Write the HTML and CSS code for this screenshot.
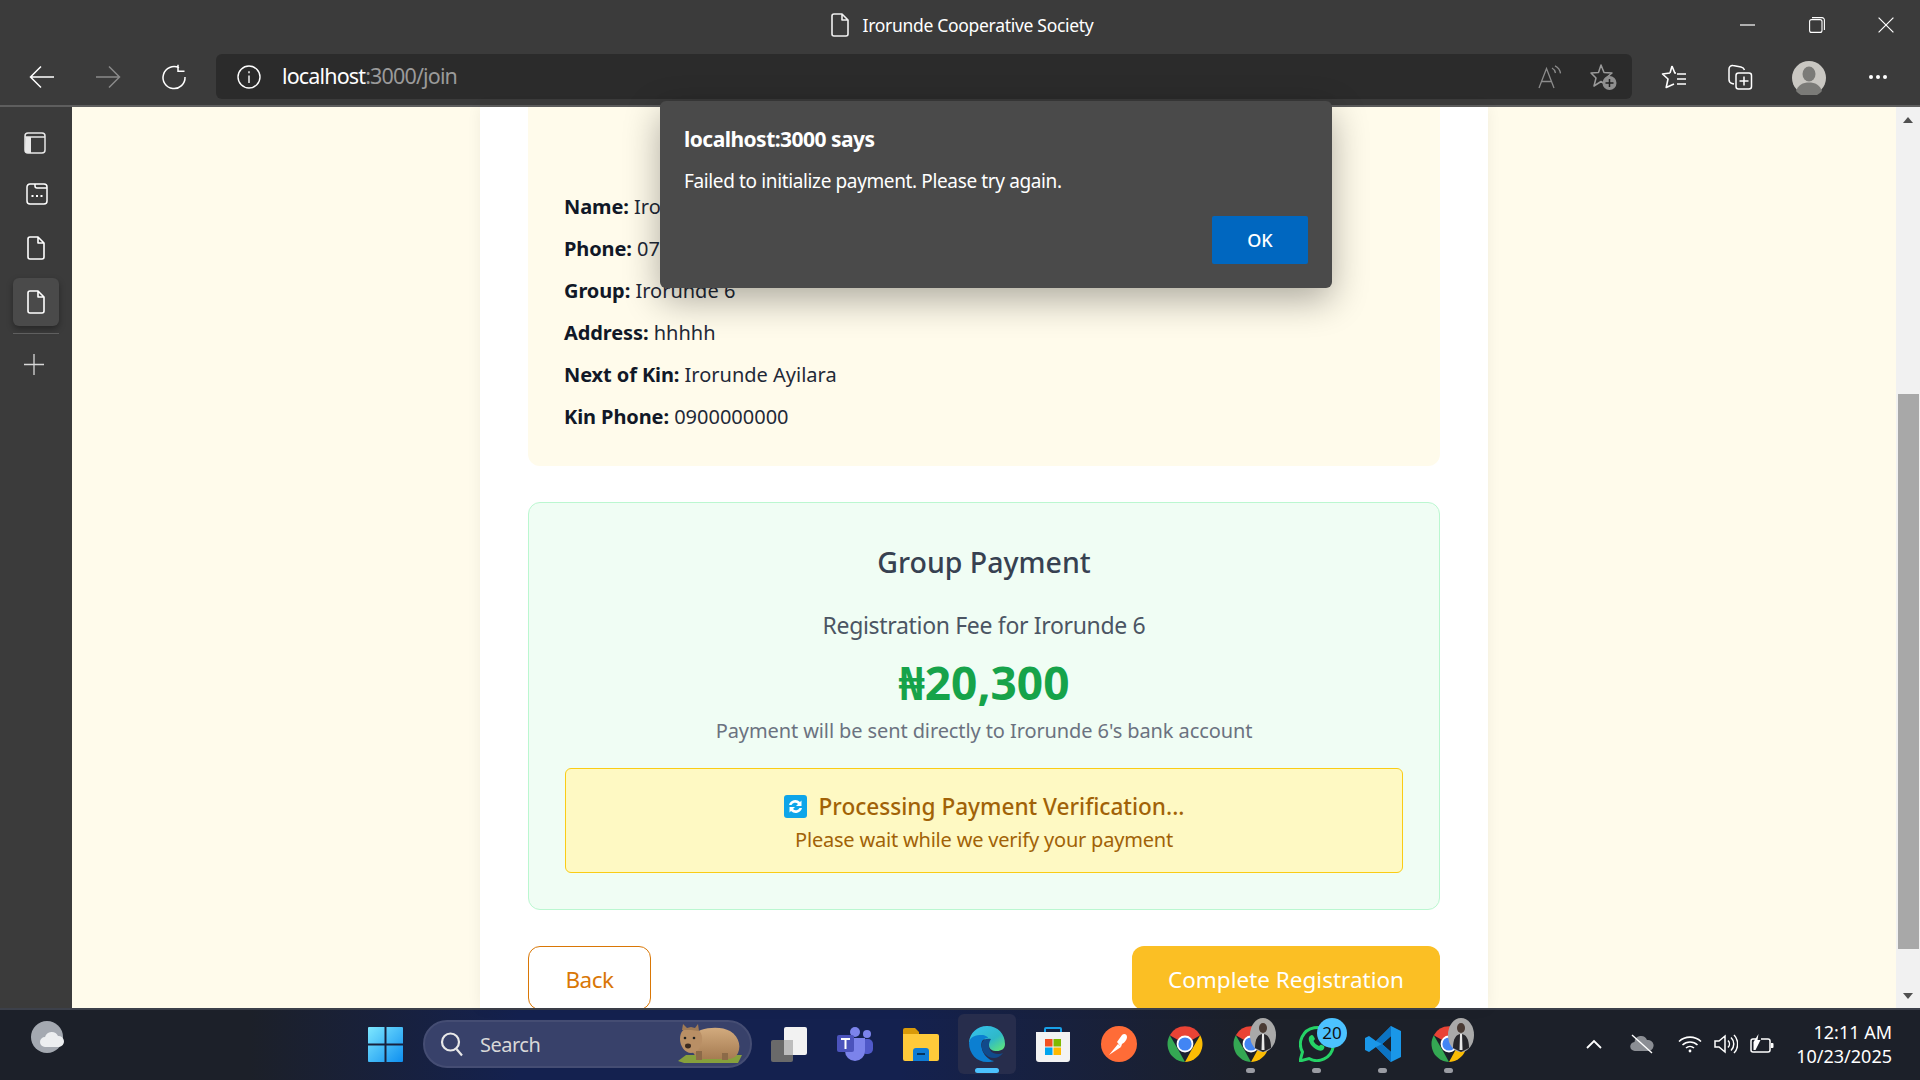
FILE: index.html
```html
<!DOCTYPE html>
<html lang="en">
<head>
  <meta charset="UTF-8">
  <title>Irorunde Cooperative Society</title>
  <link rel="stylesheet" href="styles.css">
</head>
<body>
  <svg class="defs" width="0" height="0">
    <defs>
      <symbol id="doc" viewBox="0 0 18 24"><path d="M3 1h8l6 6v14a2 2 0 0 1-2 2H3a2 2 0 0 1-2-2V3a2 2 0 0 1 2-2zM11 1v6h6" fill="none" stroke="currentColor" stroke-width="1.6" stroke-linejoin="round"/></symbol>
      <symbol id="chrome" viewBox="0 0 36 36">
        <path d="M18 18 2.800 9.200A17.500 17.500 0 0 1 33.200 9.200z" fill="#ea4335"/>
        <path d="M18 36A18 18 0 0 1 2.800 9.200l9 15.600z" fill="#34a853"/>
        <path d="M33.200 9.200A18 18 0 0 1 18 36l6-11z" fill="#fbbc04"/>
        <circle cx="18" cy="18" r="8.400" fill="#fff"/>
        <circle cx="18" cy="18" r="6.600" fill="#4285f4"/>
      </symbol>
      <symbol id="person" viewBox="0 0 26 34">
        <ellipse cx="13" cy="17" rx="13" ry="17" fill="#a9a9a9"/>
        <ellipse cx="13" cy="10" rx="4" ry="5" fill="#4a3b34"/>
        <path d="M5 30c0-9 3-14 8-14s8 5 8 14l-8 4z" fill="#26262b"/>
        <path d="M12 16h2l.5 16h-3z" fill="#e8e8e8"/>
      </symbol>
      <linearGradient id="fur" x1="0" y1="0" x2="0" y2="1"><stop offset="0" stop-color="#d2ab7e"/><stop offset="1" stop-color="#a67c52"/></linearGradient>
    </defs>
  </svg>

  <!-- title bar -->
  <div class="titlebar">
    <div></div>
    <div class="title">
      <svg class="title-icon" width="18" height="24"><use href="#doc"/></svg>
      <span>Irorunde Cooperative Society</span>
    </div>
    <div class="win-controls">
      <button class="win-btn"><svg width="16" height="16" viewBox="0 0 16 16"><path d="M0 8h15" stroke="#fff" stroke-width="1.2"/></svg></button>
      <button class="win-btn"><svg width="16" height="16" viewBox="0 0 16 16" fill="none" stroke="#fff" stroke-width="1.1"><rect x=".6" y="2.600" width="12.400" height="12.800" rx="2"/><path d="M3 .6h10a2.400 2.400 0 0 1 2.400 2.400v10"/></svg></button>
      <button class="win-btn"><svg width="16" height="16" viewBox="0 0 16 16"><path d="M.6.6l14.800 14.800M15.400.6.6 15.400" stroke="#fff" stroke-width="1.2"/></svg></button>
    </div>
  </div>

  <!-- toolbar -->
  <div class="toolbar">
    <button class="nav-btn"><svg width="26" height="24" viewBox="0 0 26 24" fill="none" stroke="#fff" stroke-width="1.5"><path d="M25 12H2M12 1.500 1.500 12 12 22.500"/></svg></button>
    <button class="nav-btn"><svg width="26" height="24" viewBox="0 0 26 24" fill="none" stroke="#8a8a8a" stroke-width="1.5"><path d="M1 12h23M14 1.500 24.500 12 14 22.500"/></svg></button>
    <button class="nav-btn"><svg width="26" height="26" viewBox="0 0 26 26" fill="none" stroke="#fff" stroke-width="1.5"><path d="M18 3.800A11 11 0 1 0 24 13M17 .8v6.400h6.500"/></svg></button>
    <div class="addressbar">
      <svg width="24" height="24" viewBox="0 0 24 24" fill="none" stroke="#fff" stroke-width="1.4"><circle cx="12" cy="12" r="11"/><path d="M12 10.500V18M12 6.200v2"/></svg>
      <div class="url">localhost<span class="url-dim">:3000/join</span></div>
      <div class="addr-actions">
        <svg width="24" height="24" viewBox="0 0 24 24" fill="none" stroke="#8c8c8c" stroke-width="1.3"><path d="M1 23 8.500 3.500 16 23M3.500 16.500h10M14 3c2 1 3 2.500 3.500 5M17 .8c3 1.500 5 4 5.500 7.500"/></svg>
        <svg width="28" height="28" viewBox="0 0 28 28"><path d="M11 2l3 7.500 8 .5-6 5 2 8-7-4.500L4 23l2-8-5-5 7.500-.5z" fill="none" stroke="#9a9a9a" stroke-width="1.5" stroke-linejoin="round"/><circle cx="19.500" cy="20" r="7" fill="#8f8f8f"/><path d="M19.500 16v8M15.500 20h8" stroke="#222" stroke-width="1.500"/></svg>
      </div>
    </div>
    <div class="browser-actions">
      <button class="nav-btn"><svg width="26" height="26" viewBox="0 0 26 26" fill="none" stroke="#fff" stroke-width="1.6" stroke-linejoin="round"><path d="M11 2l2.800 7H15M9 9 1.500 10l5.500 5-1.800 8.500L13 20M9 9l2-7"/><path d="M16 10h9M16 15h9M16 20h9"/></svg></button>
      <button class="nav-btn"><svg width="26" height="28" viewBox="0 0 26 28" fill="none" stroke="#fff" stroke-width="1.5"><path d="M7 21l-2-.5c-2-.5-3-2-3-4V6c0-2 2-4 4-3.500l8 1.500c2 .4 3 1.500 3.500 3"/><rect x="9" y="10" width="15.500" height="16" rx="2.500"/><path d="M17 13.500v9M12.500 18h9"/></svg></button>
      <div class="avatar">
        <svg width="34" height="34" viewBox="0 0 34 34"><circle cx="17" cy="17" r="17" fill="#c9c7c2"/><ellipse cx="17" cy="13" rx="6.500" ry="7.500" fill="#7b7b78"/><path d="M4 30c2-6 7-8.500 13-8.500S28 24 30 30a17 17 0 0 1-26 0z" fill="#7b7b78"/></svg>
      </div>
      <button class="nav-btn dots"><svg width="20" height="6" viewBox="0 0 20 6" fill="#fff"><circle cx="3" cy="3" r="2"/><circle cx="10" cy="3" r="2"/><circle cx="17" cy="3" r="2"/></svg></button>
    </div>
  </div>

  <div class="main">
    <!-- edge vertical tabs -->
    <aside class="sidebar">
      <svg class="side-icon" width="22" height="22" viewBox="0 0 22 22"><rect x="1" y="1" width="20" height="20" rx="3" fill="none" stroke="#e8e8e8" stroke-width="1.500"/><path d="M1 5h20" stroke="#e8e8e8" stroke-width="1.500"/><path d="M1.500 5H7v16H4a3 3 0 0 1-3-3z" fill="#e8e8e8"/></svg>
      <svg class="side-icon" width="22" height="22" viewBox="0 0 22 22" fill="none" stroke="#fff" stroke-width="1.500"><path d="M4 1h14a3 3 0 0 1 3 3v14a3 3 0 0 1-3 3H4a3 3 0 0 1-3-3V4a3 3 0 0 1 3-3zM9 1v2a2 2 0 0 0 2 2h10"/><path d="M5.500 13h2M10 13h2M14.500 13h2" stroke-width="2.200"/></svg>
      <svg class="side-icon side-doc" width="18" height="24"><use href="#doc"/></svg>
      <div class="side-tab"><svg width="18" height="24"><use href="#doc"/></svg></div>
      <div class="side-rule"></div>
      <svg class="side-icon side-plus" width="20" height="21" viewBox="0 0 20 21"><path d="M10 0v21M0 10.500h20" stroke="#d8d8d8" stroke-width="1.300"/></svg>
    </aside>

    <div class="viewport">
      <div class="panel">
        <section class="summary">
          <p class="row"><b>Name:</b> Irorunde Ayilara</p>
          <p class="row"><b>Phone:</b> 0700000000</p>
          <p class="row"><b>Group:</b> Irorunde 6</p>
          <p class="row"><b>Address:</b> hhhhh</p>
          <p class="row"><b>Next of Kin:</b> Irorunde Ayilara</p>
          <p class="row"><b>Kin Phone:</b> 0900000000</p>
        </section>

        <section class="payment">
          <h3 class="pay-title">Group Payment</h3>
          <p class="pay-for">Registration Fee for Irorunde 6</p>
          <p class="pay-amount">₦20,300</p>
          <p class="pay-note">Payment will be sent directly to Irorunde 6's bank account</p>
          <div class="processing">
            <div class="proc-title">
              <svg width="23" height="23" viewBox="0 0 23 23"><rect width="23" height="23" rx="3" fill="#0ea5e9"/><path d="M5 10a6.500 6.500 0 0 1 11-3l1.500-1.500V11h-5.500l2-2A4 4 0 0 0 7.500 10zM18 13a6.500 6.500 0 0 1-11 3l-1.500 1.500V12H11l-2 2a4 4 0 0 0 6.500-1z" fill="#fff"/></svg>
              <span>Processing Payment Verification...</span>
            </div>
            <p class="proc-note">Please wait while we verify your payment</p>
          </div>
        </section>

        <div class="actions">
          <button class="btn-back">Back</button>
          <button class="btn-complete">Complete Registration</button>
        </div>
      </div>

      <!-- browser alert -->
      <div class="alert">
        <div class="alert-title">localhost:3000 says</div>
        <div class="alert-text">Failed to initialize payment. Please try again.</div>
        <div class="alert-foot"><button class="alert-ok">OK</button></div>
      </div>
    </div>

    <div class="scrollbar">
      <div class="arrow-up"></div>
      <div class="thumb"></div>
      <div class="arrow-down"></div>
    </div>
  </div>

  <!-- windows taskbar -->
  <footer class="taskbar">
    <div class="weather">
      <svg width="34" height="32" viewBox="0 0 34 32"><ellipse cx="16" cy="16" rx="16" ry="16" fill="#a4a9b1"/><path d="M14 26a5 5 0 0 1 0-10 7 7 0 0 1 13-1 5.500 5.500 0 0 1 1 11z" fill="#eceef0"/></svg>
    </div>
    <div class="slot start">
      <svg width="35" height="35" viewBox="0 0 35 35"><defs><linearGradient id="win" x1="0" y1="0" x2="1" y2="1"><stop offset="0" stop-color="#7ee8ff"/><stop offset="1" stop-color="#0e8ff0"/></linearGradient></defs><path d="M1 0h15.500v16.500H0V1a1 1 0 0 1 1-1zM18.500 0H34a1 1 0 0 1 1 1v15.500H18.500zM0 18.500h16.500V35H1a1 1 0 0 1-1-1zM18.500 18.500H35V34a1 1 0 0 1-1 1H18.500z" fill="url(#win)"/></svg>
    </div>
    <div class="search">
      <svg width="24" height="26" viewBox="0 0 24 26" fill="none" stroke="#e8e8e8" stroke-width="2.200"><circle cx="10.500" cy="11" r="8.500"/><path d="M16.500 18l5.500 6.500"/></svg>
      <span class="search-label">Search</span>
      <svg class="wombat" width="70" height="42" viewBox="0 0 70 42"><path d="M2 38 10 32h56l-4 8H8z" fill="#86a03c"/><path d="M14 14C22 4 44 2 54 8c10 6 12 18 6 25-3 3-8 3-12 3H28c-8 0-14-6-14-22z" fill="url(#fur)"/><path d="M4 16C4 8 8 5 15 5s12 4 11 13c-1 7-5 12-11 12S4 23 4 16z" fill="#b98f65"/><path d="M6 7l1-6 4 4 4-1 4 1 3-4 1 7-8-1z" fill="#9f7a55"/><ellipse cx="12" cy="23" rx="3" ry="2.400" fill="#3a2a20"/><circle cx="9" cy="15" r="1.300" fill="#222"/><circle cx="18" cy="15" r="1.300" fill="#222"/><path d="M20 28h6v9h-6zM46 30h6v7h-6z" fill="#8c6a48"/></svg>
    </div>
    <div class="slot">
      <svg width="36" height="35" viewBox="0 0 36 35"><rect y="13" width="22" height="22" rx="2" fill="#6a6a6a"/><rect x="13" width="23" height="28" rx="2" fill="#f2f2f2"/><rect x="13" y="13" width="9" height="15" fill="#bdbdbd"/></svg>
    </div>
    <div class="slot">
      <svg width="36" height="34" viewBox="0 0 36 34"><circle cx="30" cy="7" r="4" fill="#7b83eb"/><rect x="24" y="12" width="12" height="15" rx="5" fill="#5059c9"/><circle cx="18" cy="5" r="5" fill="#7b83eb"/><path d="M8 11h20v13a10 10 0 0 1-20 0z" fill="#7b83eb"/><rect y="8" width="17" height="17" rx="2" fill="#4b53bc"/><path d="M4 12h9M8.500 12v10" stroke="#fff" stroke-width="2"/></svg>
    </div>
    <div class="slot">
      <svg width="36" height="33" viewBox="0 0 36 33"><path d="M0 2a2 2 0 0 1 2-2h10l4 4v4H0z" fill="#d99a09"/><path d="M0 6h34a2 2 0 0 1 2 2v23a2 2 0 0 1-2 2H2a2 2 0 0 1-2-2z" fill="#ffca3a"/><path d="M10 33V23a3 3 0 0 1 3-3h10a3 3 0 0 1 3 3v10z" fill="#0f7cd6"/><path d="M14 26h8" stroke="#07365f" stroke-width="2"/></svg>
    </div>
    <div class="slot active">
      <svg width="36" height="36" viewBox="0 0 36 36"><defs><linearGradient id="edge-a" x1="0" y1="0" x2="1" y2="1"><stop offset="0" stop-color="#35c1f1"/><stop offset=".6" stop-color="#2fb9c8"/><stop offset="1" stop-color="#66eb6e"/></linearGradient></defs><path d="M18 0c11 0 18 8 18 18 0 5-4 7-8 7-5 0-8-2-8-6 0-3-3-6-7-6-6 0-13 4-13 3C1 7 8 0 18 0z" fill="url(#edge-a)"/><path d="M0 17C1 10 7 9 13 9c3 0 6 2 6 3-6 0-8 5-6 11 1 5 6 11 12 12-1 .6-4 1-7 1C8 36 0 28 0 17z" fill="#0c7fd1"/><path d="M13 17c-2 7 4 15 12 15 3 0 7-2 9-5-4 2-11 1-13-3-2-3-1-8 1-11-4-1-8 0-9 4z" fill="#114a8b"/></svg>
      <span class="active-bar"></span>
    </div>
    <div class="slot">
      <svg width="36" height="35" viewBox="0 0 36 35"><path d="M10 6V2a1 1 0 0 1 1-1h14a1 1 0 0 1 1 1v4" fill="none" stroke="#18a0e8" stroke-width="2"/><path d="M1 5h34v27a3 3 0 0 1-3 3H4a3 3 0 0 1-3-3z" fill="#f3f3f3"/><rect x="10" y="12" width="7.500" height="7.500" fill="#f25022"/><rect x="18.500" y="12" width="7.500" height="7.500" fill="#7fba00"/><rect x="10" y="20.500" width="7.500" height="7.500" fill="#00a4ef"/><rect x="18.500" y="20.500" width="7.500" height="7.500" fill="#ffb900"/></svg>
    </div>
    <div class="slot">
      <svg width="36" height="36" viewBox="0 0 36 36"><circle cx="18" cy="18" r="18" fill="#ff6c37"/><path d="M8 29l9-11 3 3zM16 16l5-7c2-2 5-1 5 2s-3 6-5 7l-1 3z" fill="#fff"/></svg>
    </div>
    <div class="slot"><svg width="36" height="36"><use href="#chrome"/></svg></div>
    <div class="slot pinned">
      <svg width="36" height="36"><use href="#chrome"/></svg>
      <svg class="badge-photo" width="26" height="34"><use href="#person"/></svg>
      <span class="run-dot"></span>
    </div>
    <div class="slot pinned">
      <svg width="36" height="36" viewBox="0 0 36 36"><path d="M1 35l2.500-9A16.500 16.500 0 1 1 10 32.500z" fill="none" stroke="#25d366" stroke-width="3"/><path d="M11 10c2-2 3-1 4 1l1 2-1.500 2c1 2 3 4 5.500 5l2-1.500 3 1.500c1 1 0 3-1 4-3 2-8-.5-11-4s-4.500-8-2-10z" fill="#25d366"/></svg>
      <span class="count">20</span>
      <span class="run-dot"></span>
    </div>
    <div class="slot pinned">
      <svg width="36" height="36" viewBox="0 0 36 36"><path d="M26 0l10 5v26l-10 5L11 21l-7 5-4-2V12l4-2 7 5zM26 10l-9 8 9 8z" fill="#1a97e8"/><path d="M26 0v10l-9 8-6-3zM26 26v10L11 21l6-3z" fill="#0c74c4"/></svg>
      <span class="run-dot"></span>
    </div>
    <div class="slot pinned">
      <svg width="36" height="36"><use href="#chrome"/></svg>
      <svg class="badge-photo" width="26" height="34"><use href="#person"/></svg>
      <span class="run-dot"></span>
    </div>

    <div class="tray">
      <svg class="tray-chevron" width="16" height="10" viewBox="0 0 16 10"><path d="M1 9l7-7 7 7" fill="none" stroke="#fff" stroke-width="1.800"/></svg>
      <svg class="tray-cloud" width="24" height="20" viewBox="0 0 24 20"><path d="M5 17a4.500 4.500 0 0 1-.5-9A6.500 6.500 0 0 1 17 6a5.500 5.500 0 0 1 2 11z" fill="#8b8e94"/><path d="M2 1l20 18" stroke="#fff" stroke-width="1.400"/></svg>
      <svg class="tray-wifi" width="24" height="18" viewBox="0 0 24 18" fill="none" stroke="#fff" stroke-width="1.600"><path d="M1 6.500a16 16 0 0 1 22 0M4.500 10a11 11 0 0 1 15 0M8 13a6 6 0 0 1 8 0"/><circle cx="12" cy="16" r="1.400" fill="#fff" stroke="none"/></svg>
      <svg class="tray-vol" width="24" height="20" viewBox="0 0 24 20" fill="none" stroke="#fff" stroke-width="1.500"><path d="M1 7v6h4l6 5V2L5 7zM14 6.500a5 5 0 0 1 0 7M17 3.500a9 9 0 0 1 0 13M20 1a13 13 0 0 1 0 18"/></svg>
      <svg class="tray-bat" width="24" height="20" viewBox="0 0 24 20"><path d="M6 5H3a2 2 0 0 0-2 2v9a2 2 0 0 0 2 2h15a2 2 0 0 0 2-2V7a2 2 0 0 0-2-2h-7" fill="none" stroke="#fff" stroke-width="1.500"/><path d="M3.500 16V8l5-8-1 6h3l-5 10z" fill="#fff"/><path d="M21 9h1.500a1 1 0 0 1 1 1v3a1 1 0 0 1-1 1H21z" fill="#fff"/></svg>
      <div class="clock">
        <div>12:11 AM</div>
        <div>10/23/2025</div>
      </div>
    </div>
  </footer>
</body>
</html>
```

FILE: styles.css
```css
* {
  box-sizing: border-box;
}

html, body {
  margin: 0;
  height: 1080px;
  overflow: hidden;
}

body {
  font-family: "Noto Sans", "Open Sans", sans-serif;
  display: flex;
  flex-direction: column;
  background-color: #3b3b3b;
}

button {
  font-family: inherit;
  border: none;
  background: none;
  padding: 0;
}

p, h3 {
  margin: 0;
}

.defs {
  position: absolute;
}

/* title bar */
.titlebar {
  height: 50px;
  display: grid;
  grid-template-columns: 1fr auto 1fr;
  align-items: center;
  color: #fff;
}

.title {
  display: flex;
  align-items: center;
  gap: 14px;
  margin-left: 4px;
  font-size: 17.5px;
  letter-spacing: -0.3px;
}

.title-icon {
  color: #f0f0f0;
}

.win-controls {
  display: flex;
  justify-content: flex-end;
}

.win-btn {
  width: 69px;
  height: 50px;
  display: flex;
  align-items: center;
  justify-content: center;
}

/* toolbar */
.toolbar {
  height: 57px;
  display: flex;
  align-items: flex-start;
  padding-left: 9px;
  border-bottom: 2px solid #5e5e5e;
}

.nav-btn {
  width: 66px;
  height: 45px;
  margin-top: 4px;
  display: flex;
  align-items: center;
  justify-content: center;
}

.addressbar {
  width: 1416px;
  height: 45px;
  margin: 4px 0 0 9px;
  padding: 0 14px 0 21px;
  display: flex;
  align-items: center;
  background-color: #2b2b2b;
  border-radius: 6px;
}

.url {
  margin: 0 0 2px 21px;
  color: #fff;
  font-size: 21.5px;
  letter-spacing: -0.85px;
}

.url-dim {
  color: #9a9a9a;
}

.addr-actions {
  margin-left: auto;
  display: flex;
  align-items: center;
  gap: 28px;
}

.browser-actions {
  display: flex;
  margin-left: 9px;
}

.avatar {
  width: 66px;
  height: 45px;
  margin: 5px 0 0 3px;
  display: flex;
  justify-content: center;
  align-items: center;
}

.dots {
  margin-left: 3px;
}

/* main area */
.main {
  height: 901px;
  display: flex;
}

.sidebar {
  width: 72px;
  flex-shrink: 0;
  display: flex;
  flex-direction: column;
  align-items: center;
  background-color: #3b3b3b;
  color: #fff;
}

.side-icon {
  margin-top: 25px;
}

.sidebar .side-icon:first-child {
  transform: translateX(-1px);
}

.side-icon:nth-child(2) {
  margin-top: 29px;
  transform: translateX(1px);
}

.side-doc {
  margin-top: 31px;
}

.side-tab {
  width: 46px;
  height: 48px;
  margin-top: 18px;
  display: flex;
  align-items: center;
  justify-content: center;
  background-color: #4a4a4a;
  border-radius: 6px;
  box-shadow: 0 3px 6px rgba(0, 0, 0, 0.35);
}

.side-rule {
  width: 46px;
  height: 1px;
  margin-top: 7px;
  background-color: #5f5f5f;
}

.side-plus {
  margin-top: 20px;
  transform: translateX(-2px);
}

.viewport {
  flex: 1;
  position: relative;
  background-color: #fffbeb;
  overflow: visible;
}

.panel {
  width: 1008px;
  height: 901px;
  margin: 0 auto;
  padding: 0 48px;
  background-color: #fff;
  box-shadow: 0 0 14px rgba(0, 0, 0, 0.06);
  overflow: hidden;
}

.summary {
  padding: 79px 36px 28px;
  background-color: #fffbeb;
  border-radius: 0 0 12px 12px;
}

.row {
  height: 42px;
  line-height: 42px;
  font-size: 20px;
  color: #1f2937;
}

.row b {
  color: #111827;
  font-weight: 700;
  letter-spacing: -0.1px;
}

.payment {
  margin-top: 36px;
  padding: 39px 36px 36px;
  background-color: #f0fdf4;
  border: 1px solid #bbf7d0;
  border-radius: 12px;
  text-align: center;
}

.pay-title {
  height: 40px;
  line-height: 40px;
  font-size: 28.5px;
  font-weight: 500;
  color: #374151;
}

.pay-for {
  margin-top: 28px;
  height: 30px;
  line-height: 30px;
  font-size: 23px;
  letter-spacing: -0.33px;
  color: #4b5563;
}

.pay-amount {
  margin-top: 14px;
  height: 56px;
  line-height: 56px;
  font-size: 46px;
  font-weight: 700;
  color: #16a34a;
}

.pay-note {
  margin-top: 6px;
  height: 30px;
  line-height: 30px;
  font-size: 20px;
  letter-spacing: -0.1px;
  color: #6b7280;
}

.processing {
  height: 105px;
  margin-top: 22px;
  padding-top: 21px;
  background-color: #fef9c3;
  border: 1px solid #facc15;
  border-radius: 6px;
}

.proc-title {
  height: 33px;
  display: flex;
  align-items: center;
  justify-content: center;
  gap: 12px;
  font-size: 22.6px;
  font-weight: 500;
  color: #a16207;
}

.proc-note {
  height: 33px;
  line-height: 33px;
  font-size: 20px;
  letter-spacing: -0.2px;
  color: #a16207;
}

.actions {
  margin-top: 36px;
  display: flex;
  justify-content: space-between;
}

.btn-back {
  width: 123px;
  height: 64px;
  padding-top: 2px;
  font-size: 22.5px;
  letter-spacing: -0.5px;
  color: #d97706;
  background-color: #fff;
  border: 1px solid #d97706;
  border-radius: 12px;
}

.btn-complete {
  width: 308px;
  height: 64px;
  padding-top: 2px;
  font-size: 22.5px;
  color: #fff;
  background-color: #fbbf24;
  border-radius: 12px;
}

/* alert dialog */
.alert {
  position: absolute;
  top: -6px;
  left: 588px;
  width: 672px;
  height: 187px;
  padding: 25px 24px 0;
  background-color: #4a4a4a;
  border-radius: 6px;
  color: #fff;
  box-shadow: 0 12px 36px rgba(0, 0, 0, 0.32);
}

.alert-title {
  font-size: 21px;
  font-weight: 700;
  letter-spacing: -0.53px;
  line-height: 26px;
}

.alert-text {
  margin-top: 16px;
  font-size: 19px;
  letter-spacing: -0.37px;
  line-height: 26px;
}

.alert-foot {
  display: flex;
  justify-content: flex-end;
  margin-top: 22px;
}

.alert-ok {
  width: 96px;
  height: 48px;
  background-color: #0067c0;
  border-radius: 2px;
  color: #fff;
  font-size: 18px;
  font-weight: 500;
}

/* scrollbar */
.scrollbar {
  width: 24px;
  flex-shrink: 0;
  display: flex;
  flex-direction: column;
  align-items: center;
  background-color: #f1f1f1;
}

.arrow-up,
.arrow-down {
  width: 0;
  height: 0;
  border-left: 5px solid transparent;
  border-right: 5px solid transparent;
}

.arrow-up {
  margin-top: 10px;
  border-bottom: 6px solid #505050;
}

.thumb {
  width: 21px;
  height: 555px;
  margin-top: 271px;
  background-color: #a8a8a8;
}

.arrow-down {
  margin-top: 44px;
  border-top: 6px solid #505050;
}

/* taskbar */
.taskbar {
  height: 72px;
  display: flex;
  align-items: flex-start;
  border-top: 2px solid #3c404a;
  color: #fff;
  background: linear-gradient(90deg, #1c2029 0, #1c2029 250px, #14214f 520px, #14214f 900px, #1c2029 1250px, #1c2029 100%);
}

.weather {
  margin: 11px 0 0 31px;
  line-height: 0;
}

.slot {
  width: 66px;
  height: 60px;
  margin-top: 4px;
  position: relative;
  display: flex;
  align-items: center;
  justify-content: center;
  border-radius: 6px;
}

.start {
  margin-left: 287px;
}

.search {
  width: 329px;
  height: 48px;
  margin: 10px 4px 0 5px;
  padding: 0 4px 0 15px;
  display: flex;
  align-items: center;
  background-color: #38416a;
  border: 2px solid #454d73;
  border-radius: 24px;
}

.search-label {
  margin-left: 16px;
  font-size: 20px;
  letter-spacing: -0.5px;
  color: #d8d8d8;
}

.wombat {
  margin-left: auto;
}

.active {
  width: 58px;
  margin-left: 4px;
  margin-right: 4px;
  background-color: #272d4c;
}

.active-bar {
  position: absolute;
  left: 17px;
  bottom: 1px;
  width: 24px;
  height: 5px;
  border-radius: 3px;
  background-color: #4cc2ff;
}

.badge-photo {
  position: absolute;
  top: 4px;
  left: 32px;
}

.count {
  position: absolute;
  top: 4px;
  left: 33px;
  width: 30px;
  height: 30px;
  line-height: 30px;
  text-align: center;
  border-radius: 50%;
  font-size: 17px;
  color: #111;
  background-color: #4cc2ff;
}

.run-dot {
  position: absolute;
  left: 28px;
  bottom: 1px;
  width: 9px;
  height: 5px;
  border-radius: 3px;
  background-color: #9a9ca3;
}

.tray {
  margin-left: auto;
  display: flex;
  align-items: center;
  height: 68px;
  padding-right: 28px;
}

.tray svg {
  flex-shrink: 0;
}

.tray-cloud,
.tray-wifi,
.tray-vol,
.tray-bat {
  margin-left: 12px;
}

.tray-cloud {
  margin-left: 28px;
}

.tray-wifi {
  margin-left: 24px;
}

.clock {
  width: 118px;
  text-align: right;
  font-size: 18px;
  line-height: 24px;
}
```
